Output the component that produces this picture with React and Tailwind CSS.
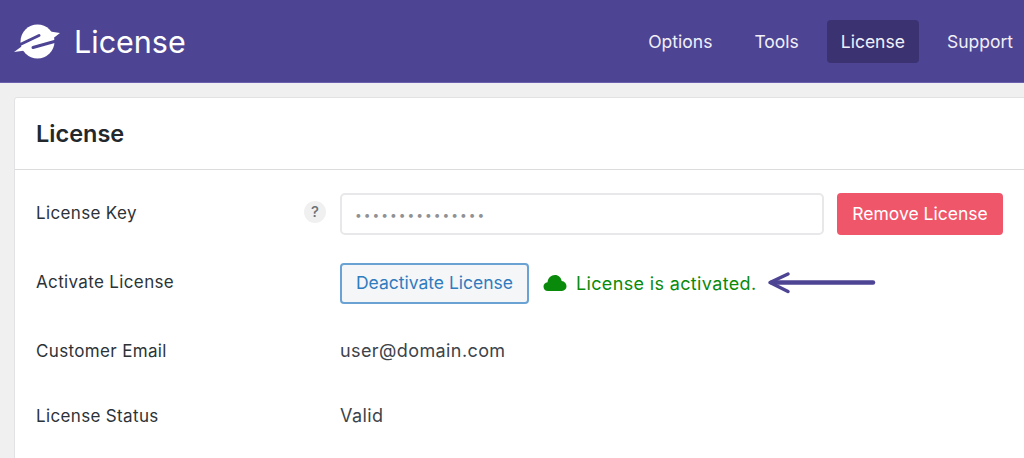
import React from 'react';

const font = { fontFamily: 'Inter, "Noto Sans", sans-serif' };

const Logo = () => (
    <svg width="55" height="42" viewBox="0 0 55 42">
        {/* planet with a swoosh ring */}
        <circle cx="27.500" cy="21.500" r="17" fill="white" />
        <path d="M4 32L15 24l4 6zM50 13l-13-2 4 9z" fill="white" />
        <path d="M7 26L29 15.500M48 20.500L23 27.500" fill="none" stroke="#4d4494" strokeWidth="3" strokeLinecap="round" />
    </svg>
);

const NavItem = ({ children, active }) => (
    <a className={active ? 'px-[14px] pt-[2px] h-[43px] flex items-center rounded bg-[#3b3272] text-[#f1f0f7]' : 'px-[14px] pt-[2px] h-[43px] flex items-center text-[#f1f0f7]'}>
        {children}
    </a>
);

const Row = ({ label, help, className, children }) => (
    <div className={`flex items-center ${className}`}>
        <div className="w-[268px] mb-[1px] text-[17px] tracking-[0.35px] text-[#2c3338]">{label}</div>
        <div className="w-[22px] mb-[4px] mr-[14px] flex justify-center">
            {help && (
                <span className="w-[22px] h-[22px] rounded-full bg-[#f0f0f1] flex items-center justify-center text-[15px] font-medium text-[#6b7075]">?</span>
            )}
        </div>
        {children}
    </div>
);

export default function App() {
    return (
        <div className="w-[1024px] h-[458px] overflow-hidden bg-[#f0f0f1] antialiased" style={font}>
            {/* Top bar */}
            <header className="h-[83px] bg-[#4d4494] border-b border-[#6a60b0] flex items-center justify-between pl-[10px]">
                <div className="flex items-center">
                    <Logo />
                    <h1 className="ml-[9px] pt-[3px] text-[30.500px] font-normal text-white leading-none">License</h1>
                </div>
                <nav className="flex items-center gap-[14px] text-[17.500px] mr-[-3px]">
                    <NavItem>Options</NavItem>
                    <NavItem>Tools</NavItem>
                    <NavItem active>License</NavItem>
                    <NavItem>Support</NavItem>
                </nav>
            </header>

            {/* Card */}
            <main className="ml-[14px] mt-[14px] w-[1030px] h-[400px] bg-white border border-[#e2e2e4] rounded-t-[3px]">
                <div className="h-[72px] border-b border-[#dcdcde] pl-[21px] pt-[1px] flex items-center">
                    <h2 className="text-[23.500px] font-semibold text-[#23282d] leading-none">License</h2>
                </div>
                <div className="pl-[21px] pt-[23px]">
                    <Row label="License Key" help className="h-[42px]">
                        <div className="w-[484px] h-[42px] border-2 border-[#e8e8ea] rounded-[5px] bg-white flex items-center pl-[13px] pt-[2px] text-[#8f9194] text-[12px] tracking-[2px]">
                            •••••••••••••••
                        </div>
                        <button className="ml-[13px] w-[166px] h-[42px] pt-[1px] rounded bg-[#f0566a] text-white text-[17.500px]">Remove License</button>
                    </Row>
                    <Row label="Activate License" className="h-[42px] mt-[27px]">
                        <button className="w-[189px] h-[41px] pt-[1px] border-2 border-[#6aa3d3] rounded-[4px] bg-[#f5f6f8] text-[#2f7cbf] text-[17.500px]">Deactivate License</button>
                        <svg className="ml-[14px]" width="24" height="18" viewBox="0 0 24 18" fill="#0a8a0a">
                            <path d="M5 17C2 17 .5 15 .5 12.500 .5 10.300 2 8.500 4.500 8.200 5 4 8 1 12 1c3.500 0 6 2.500 6.700 6 2.800.3 4.800 2.500 4.800 5.300C23.500 15 21.500 17 19 17z" />
                        </svg>
                        <span className="ml-[9px] text-[18px] tracking-[0.35px] text-[#0a8a0a]">License is activated.</span>
                        <svg className="ml-[10px]" width="110" height="24" viewBox="0 0 110 24" fill="none" stroke="#4d4494" strokeLinecap="round" strokeLinejoin="round">
                            <path d="M107 11.500H6" strokeWidth="4.500" />
                            <path d="M22 3L4 11.500l18 9" strokeWidth="3.500" />
                        </svg>
                    </Row>
                    <Row label="Customer Email" className="h-[24px] mt-[36px]">
                        <span className="mb-[3px] text-[18px] tracking-[0.4px] text-[#3c434a]">user@domain.com</span>
                    </Row>
                    <Row label="License Status" className="h-[24px] mt-[41px]">
                        <span className="mb-[3px] text-[18px] tracking-[0.4px] text-[#3c434a]">Valid</span>
                    </Row>
                </div>
            </main>
        </div>
    );
}
